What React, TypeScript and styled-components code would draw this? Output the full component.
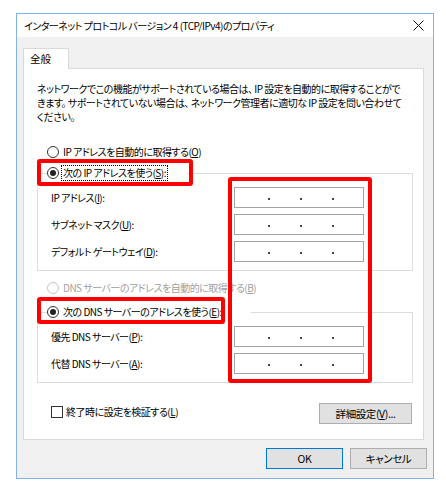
import React from "react";
import styled, { createGlobalStyle } from "styled-components";

const GlobalStyle = createGlobalStyle`
  html, body { margin: 0; padding: 0; background: #ffffff; }
  body {
    font-family: "Noto Sans CJK JP", "Noto Sans", sans-serif;
    font-feature-settings: "palt";
    color: #000;
    -webkit-font-smoothing: antialiased;
  }
  * { box-sizing: border-box; }
`;

const Window = styled.div`
  margin: 13px 0 0 16px;
  width: 418px;
  height: 466px;
  border: 1px solid #80b3e6;
  display: flex;
  flex-direction: column;
  background: #f0f0f0;
`;

const TitleBar = styled.div`
  height: 23px;
  background: #ffffff;
  display: flex;
  align-items: center;
  justify-content: space-between;
  padding: 0 9px 0 7px;
  font-size: 10px;
  letter-spacing: -0.5px;
  white-space: nowrap;
`;

const CloseIcon = styled.svg`
  width: 11px;
  height: 11px;
  display: block;
`;

const Body = styled.div`
  flex: 1;
  display: flex;
  flex-direction: column;
  padding-top: 11px;
`;

const TabArea = styled.div`
  margin: 0 9px 0 6px;
  display: flex;
  flex-direction: column;
`;

const TabStrip = styled.div`
  display: flex;
`;

const Tab = styled.div`
  position: relative;
  z-index: 1;
  width: 46px;
  height: 21px;
  margin-bottom: -1px;
  background: #ffffff;
  border: 1px solid #d9d9d9;
  border-bottom: none;
  padding-left: 6px;
  font-size: 10.5px;
  line-height: 19px;
`;

const Panel = styled.div`
  position: relative;
  height: 372px;
  background: #ffffff;
  border: 1px solid #d9d9d9;
  padding: 13px 10px 0 13px;
  display: flex;
  flex-direction: column;
  font-size: 10px;
  letter-spacing: -0.5px;
`;

const Intro = styled.p`
  margin: 0;
  line-height: 14px;
  white-space: nowrap;
`;

const OptionRow = styled.div<{ $top: number }>`
  margin-top: ${(p) => p.$top}px;
  padding-left: 10px;
  height: 16px;
  display: flex;
  align-items: center;
  gap: 3px;
  white-space: nowrap;
`;

const Radio = styled.span<{ $checked?: boolean; $disabled?: boolean }>`
  position: relative;
  width: 12px;
  height: 12px;
  border-radius: 50%;
  border: 1px solid ${(p) => (p.$disabled ? "#c4c4c4" : "#333333")};
  background: #ffffff;
  flex: none;
  &::after {
    content: "";
    display: ${(p) => (p.$checked ? "block" : "none")};
    position: absolute;
    left: 2px;
    top: 2px;
    width: 6px;
    height: 6px;
    border-radius: 50%;
    background: #222222;
  }
`;

const OptionText = styled.span<{ $disabled?: boolean; $focused?: boolean }>`
  color: ${(p) => (p.$disabled ? "#a0a0a0" : "#000")};
  line-height: 14px;
  padding: 0 1px;
  outline: ${(p) => (p.$focused ? "1px dotted #000" : "none")};
`;

const Group = styled.fieldset<{ $top: number }>`
  margin: ${(p) => p.$top}px 0 0 0;
  min-width: 0;
  border: 1px solid #dcdcdc;
  padding: 6px 0 8px 0;
  display: flex;
  flex-direction: column;
  gap: 6px;
`;

const GroupLegend = styled.legend<{ $gap: number }>`
  margin-left: 9px;
  padding: 0 ${(p) => p.$gap}px 0 0;
  height: 16px;
  display: flex;
  align-items: center;
  gap: 3px;
  white-space: nowrap;
`;

const FieldRow = styled.div`
  display: grid;
  grid-template-columns: 183px 130px;
  align-items: center;
  padding-left: 13px;
  height: 21px;
`;

const FieldLabel = styled.span`
  white-space: nowrap;
`;

const IpBox = styled.div`
  height: 21px;
  border: 1px solid #a3a3a3;
  background: #ffffff;
  display: flex;
  align-items: center;
  padding: 3px 0 0 33px;
  gap: 30px;
`;

const IpDot = styled.span`
  width: 2px;
  height: 2px;
  background: #3b4656;
`;

const BottomRow = styled.div`
  margin-top: 20px;
  display: flex;
  align-items: center;
  justify-content: space-between;
  padding: 0 1px 0 14px;
`;

const CheckLabel = styled.div`
  display: flex;
  align-items: center;
  gap: 3px;
  white-space: nowrap;
  margin-top: -4px;
`;

const Checkbox = styled.span`
  width: 12px;
  height: 12px;
  border: 1px solid #333333;
  background: #ffffff;
  flex: none;
`;

const Button = styled.button<{ $w: number; $default?: boolean }>`
  width: ${(p) => p.$w}px;
  height: 21px;
  margin: 0;
  padding: 0;
  background: #e1e1e1;
  border: 1px solid ${(p) => (p.$default ? "#0078d7" : "#adadad")};
  font-family: inherit;
  font-feature-settings: "palt";
  font-size: 10.5px;
  letter-spacing: -0.4px;
  color: #000;
  white-space: nowrap;
`;

const Footer = styled.div`
  display: flex;
  justify-content: flex-end;
  gap: 7px;
  padding: 8px 6px 0 0;
`;

const Highlight = styled.div<{ $l: number; $t: number; $w: number; $h: number }>`
  position: absolute;
  left: ${(p) => p.$l}px;
  top: ${(p) => p.$t}px;
  width: ${(p) => p.$w}px;
  height: ${(p) => p.$h}px;
  border: 4px solid #ff0000;
  border-radius: 3px;
  pointer-events: none;
  z-index: 2;
`;

const IpField = () => (
  <IpBox>
    <IpDot />
    <IpDot />
    <IpDot />
  </IpBox>
);

export default function App() {
  return (
    <>
      <GlobalStyle />
      <Window>
        <TitleBar>
          <span>インターネット プロトコル バージョン 4 (TCP/IPv4)のプロパティ</span>
          <CloseIcon viewBox="0 0 11 11">
            <path d="M0.5 0.5 L10.5 10.5 M10.5 0.5 L0.5 10.5" stroke="#111" strokeWidth="1" fill="none" />
          </CloseIcon>
        </TitleBar>
        <Body>
          <TabArea>
            <TabStrip>
              <Tab>全般</Tab>
            </TabStrip>
            <Panel>
              <Intro>
                ネットワークでこの機能がサポートされている場合は、 IP 設定を自動的に取得することがで
                <br />
                きます。 サポートされていない場合は、 ネットワーク管理者に適切な IP 設定を問い合わせて
                <br />
                ください。
              </Intro>

              <OptionRow $top={20}>
                <Radio />
                <OptionText>
                  IP アドレスを自動的に取得する(<u>O</u>)
                </OptionText>
              </OptionRow>

              <Group $top={5}>
                <GroupLegend $gap={20}>
                  <Radio $checked />
                  <OptionText $focused>
                    次の IP アドレスを使う(<u>S</u>):
                  </OptionText>
                </GroupLegend>
                <FieldRow>
                  <FieldLabel>
                    IP アドレス(<u>I</u>):
                  </FieldLabel>
                  <IpField />
                </FieldRow>
                <FieldRow>
                  <FieldLabel>
                    サブネット マスク(<u>U</u>):
                  </FieldLabel>
                  <IpField />
                </FieldRow>
                <FieldRow>
                  <FieldLabel>
                    デフォルト ゲートウェイ(<u>D</u>):
                  </FieldLabel>
                  <IpField />
                </FieldRow>
              </Group>

              <OptionRow $top={9}>
                <Radio $disabled />
                <OptionText $disabled>
                  DNS サーバーのアドレスを自動的に取得する(<u>B</u>)
                </OptionText>
              </OptionRow>

              <Group $top={8}>
                <GroupLegend $gap={28}>
                  <Radio $checked />
                  <OptionText>
                    次の DNS サーバーのアドレスを使う(<u>E</u>):
                  </OptionText>
                </GroupLegend>
                <FieldRow>
                  <FieldLabel>
                    優先 DNS サーバー(<u>P</u>):
                  </FieldLabel>
                  <IpField />
                </FieldRow>
                <FieldRow>
                  <FieldLabel>
                    代替 DNS サーバー(<u>A</u>):
                  </FieldLabel>
                  <IpField />
                </FieldRow>
              </Group>

              <BottomRow>
                <CheckLabel>
                  <Checkbox />
                  <span>
                    終了時に設定を検証する(<u>L</u>)
                  </span>
                </CheckLabel>
                <Button $w={93}>
                  詳細設定(<u>V</u>)...
                </Button>
              </BottomRow>

              <Highlight $l={13} $t={90} $w={156} $h={27} />
              <Highlight $l={204} $t={108} $w={144} $h={206} />
              <Highlight $l={13} $t={228} $w={188} $h={27} />
            </Panel>
          </TabArea>
          <Footer>
            <Button $w={77} $default>
              OK
            </Button>
            <Button $w={77}>キャンセル</Button>
          </Footer>
        </Body>
      </Window>
    </>
  );
}
